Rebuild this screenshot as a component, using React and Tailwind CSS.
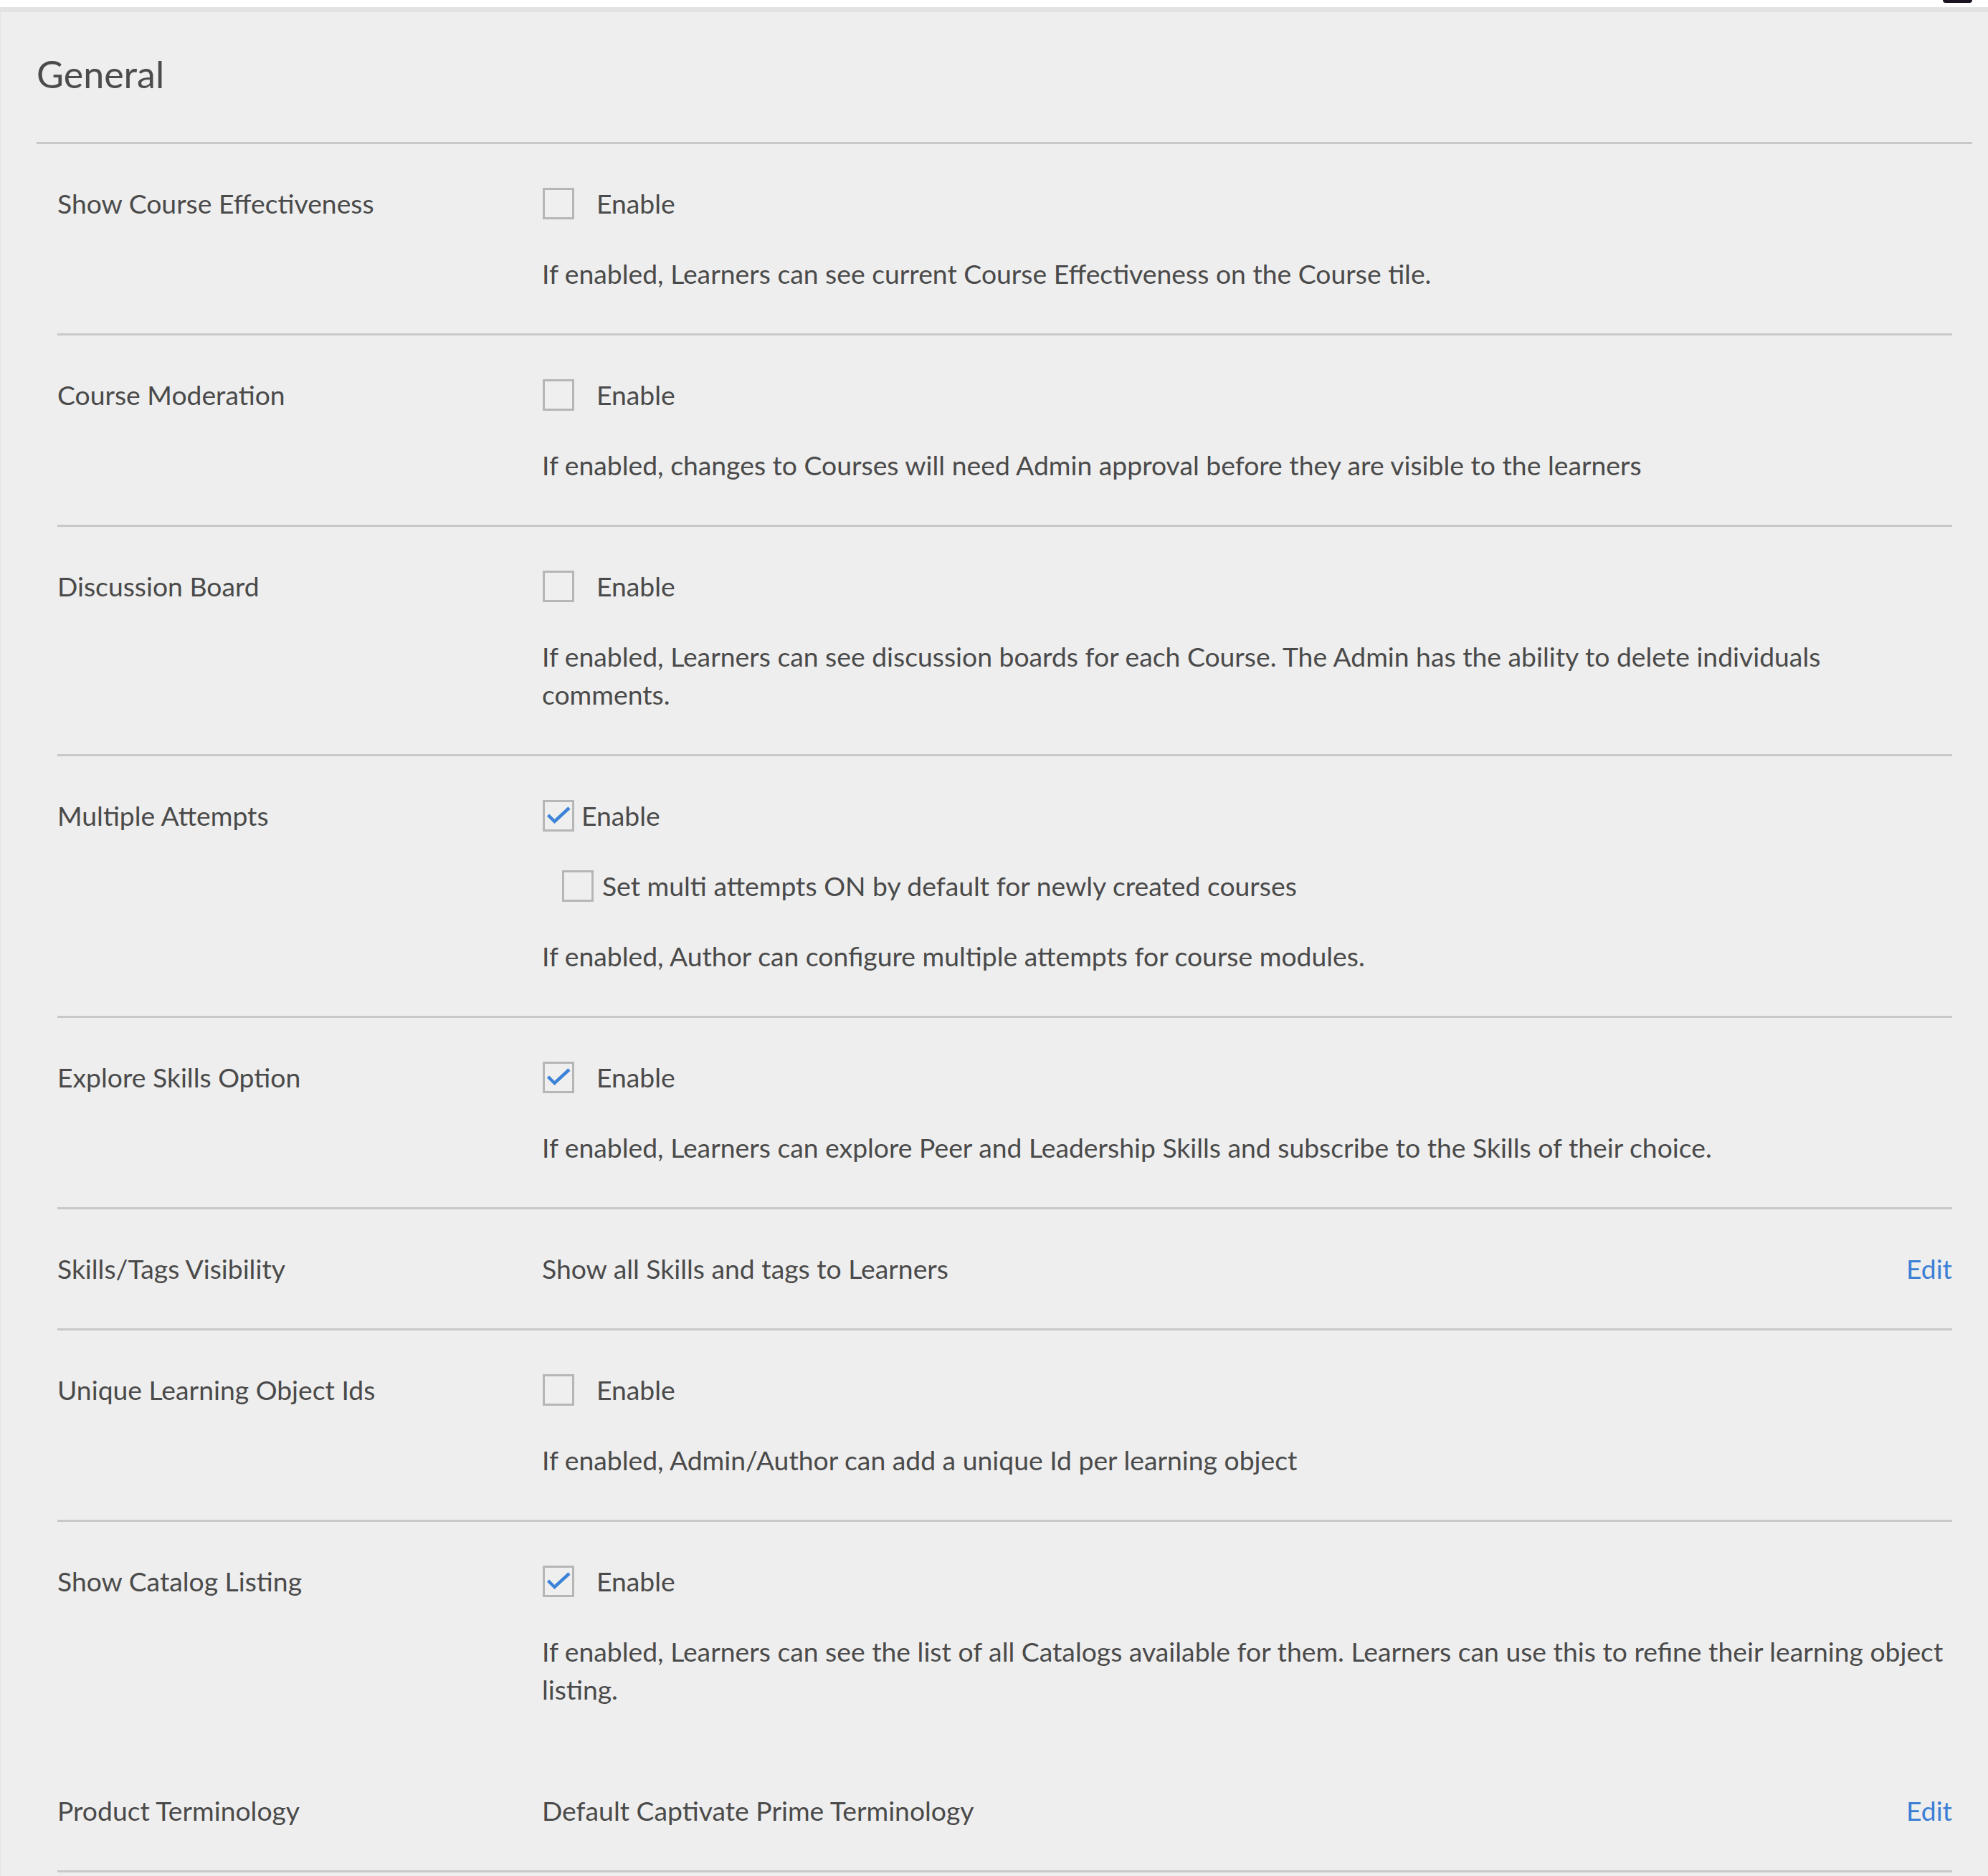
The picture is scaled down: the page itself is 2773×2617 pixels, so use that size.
import React from 'react';

const SETTINGS = [
  {
    label: 'Show Course Effectiveness',
    checked: false,
    desc: ['If enabled, Learners can see current Course Effectiveness on the Course tile.'],
  },
  {
    label: 'Course Moderation',
    checked: false,
    desc: ['If enabled, changes to Courses will need Admin approval before they are visible to the learners'],
  },
  {
    label: 'Discussion Board',
    checked: false,
    desc: [
      'If enabled, Learners can see discussion boards for each Course. The Admin has the ability to delete individuals',
      'comments.',
    ],
  },
  {
    label: 'Multiple Attempts',
    checked: true,
    tight: true,
    sub: 'Set multi attempts ON by default for newly created courses',
    desc: ['If enabled, Author can configure multiple attempts for course modules.'],
  },
  {
    label: 'Explore Skills Option',
    checked: true,
    desc: ['If enabled, Learners can explore Peer and Leadership Skills and subscribe to the Skills of their choice.'],
  },
  {
    label: 'Skills/Tags Visibility',
    value: 'Show all Skills and tags to Learners',
    edit: true,
  },
  {
    label: 'Unique Learning Object Ids',
    checked: false,
    desc: ['If enabled, Admin/Author can add a unique Id per learning object'],
  },
  {
    label: 'Show Catalog Listing',
    checked: true,
    hideBorder: true,
    desc: [
      'If enabled, Learners can see the list of all Catalogs available for them. Learners can use this to refine their learning object',
      'listing.',
    ],
  },
  {
    label: 'Product Terminology',
    value: 'Default Captivate Prime Terminology',
    edit: true,
  },
];

function Checkbox({ checked }) {
  return (
    <div className="h-[44px] w-[44px] shrink-0 border-[3px] border-[#b6b6b6] bg-[#efefef]">
      {checked && (
        <svg viewBox="0 0 38 38" className="h-full w-full">
          <path
            d="M4.5 18 L13.5 27 L34 8"
            fill="none"
            stroke="#3c83d8"
            strokeWidth="4.5"
            strokeLinejoin="miter"
          />
        </svg>
      )}
    </div>
  );
}

function SettingRow({ item }) {
  return (
    <div
      className={
        item.hideBorder
          ? 'flex border-b-[3px] border-transparent pt-[56px] pb-[57px]'
          : 'flex border-b-[3px] border-[#c8c8c8] pt-[56px] pb-[57px]'
      }
    >
      <div className="w-[676px] shrink-0">{item.label}</div>

      {item.edit ? (
        <div className="flex flex-1 items-center justify-between">
          <span>{item.value}</span>
          <span className="text-[#3d7fd6]">Edit</span>
        </div>
      ) : (
        <div className="flex flex-1 flex-col gap-[45px]">
          <div className="flex h-[53px] items-center pl-[1px]">
            <Checkbox checked={item.checked} />
            <span className={item.tight ? 'ml-[10px]' : 'ml-[31px]'}>Enable</span>
          </div>

          {item.sub && (
            <div className="flex h-[53px] items-center pl-[28px]">
              <Checkbox checked={false} />
              <span className="ml-[12px]">{item.sub}</span>
            </div>
          )}

          <p>
            {item.desc.map((line, i) => (
              <React.Fragment key={i}>
                {line}
                {i < item.desc.length - 1 && <br />}
              </React.Fragment>
            ))}
          </p>
        </div>
      )}
    </div>
  );
}

export default function App() {
  return (
    <div className="bg-white font-[Lato,sans-serif] text-[37.3px] leading-[53px] text-[#4a4a4a]">
      {/* bit of the header above */}
      <div className="flex h-[10px] justify-end pr-[22px]">
        <div className="h-[4px] w-[41px] rounded-b-sm bg-[#1b1420]" />
      </div>

      <div className="border-t-[7px] border-l border-[#e3e3e3] bg-[#eeeeee] pr-[22px] pb-[5px] pl-[50px]">
        <h1 className="pt-[55px] text-[52px] leading-[62px] text-[#4c4c4c]">General</h1>
        <div className="mt-[64px] h-[3px] bg-[#c8c8c8]" />

        <div className="mr-[28px] ml-[29px]">
          {SETTINGS.map(item => (
            <SettingRow key={item.label} item={item} />
          ))}
        </div>
      </div>
    </div>
  );
}
